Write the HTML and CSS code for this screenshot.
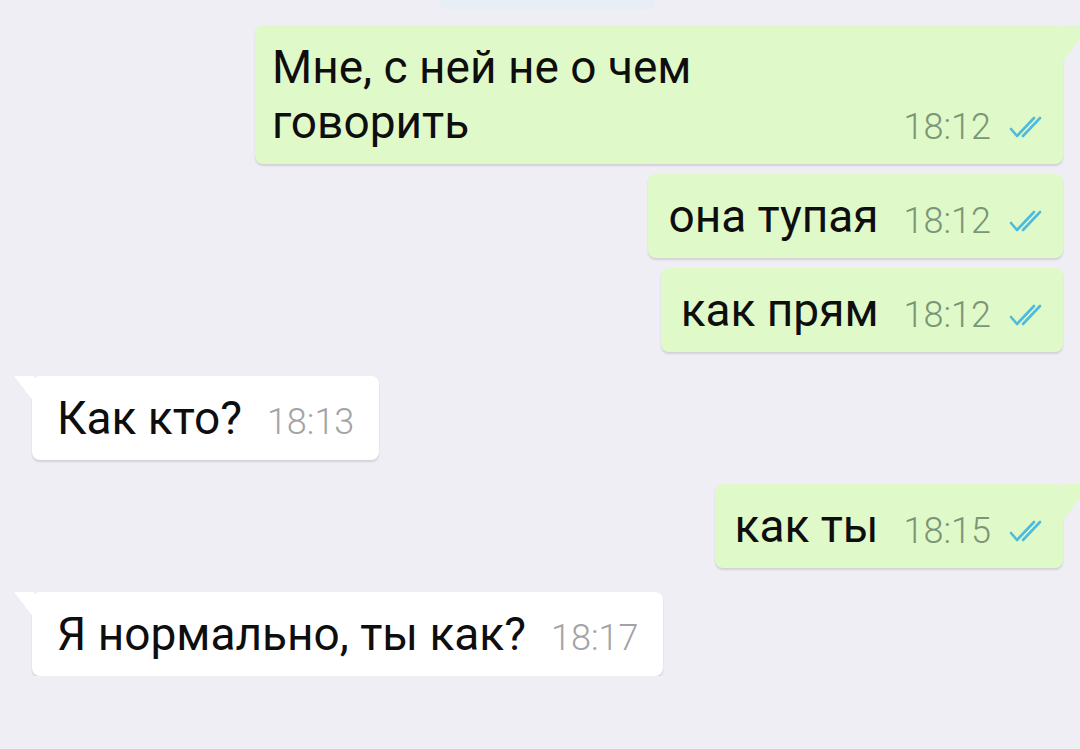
FILE: index.html
```html
<!DOCTYPE html>
<html lang="ru">
<head>
<meta charset="UTF-8">
<meta name="viewport" content="width=device-width, initial-scale=1.0">
<title>Чат</title>
<link rel="stylesheet" href="styles.css">
</head>
<body>

<div class="chat">
    <div class="date-chip"></div>

    <div class="row out">
        <div class="bubble wide">
            <span class="text">Мне, с ней не о чем<br>говорить</span>
            <span class="meta">18:12 <svg class="ticks" viewBox="0 0 37 22"><path d="M3 13 L9 20 L26 2"/><path d="M15 20 L32 2"/></svg></span>
        </div>
    </div>

    <div class="row out">
        <div class="bubble">
            <span class="text">она тупая</span>
            <span class="meta">18:12 <svg class="ticks" viewBox="0 0 37 22"><path d="M3 13 L9 20 L26 2"/><path d="M15 20 L32 2"/></svg></span>
        </div>
    </div>

    <div class="row out">
        <div class="bubble">
            <span class="text">как прям</span>
            <span class="meta">18:12 <svg class="ticks" viewBox="0 0 37 22"><path d="M3 13 L9 20 L26 2"/><path d="M15 20 L32 2"/></svg></span>
        </div>
    </div>

    <div class="row in gap">
        <div class="bubble tail">
            <span class="text">Как кто?</span>
            <span class="meta">18:13</span>
        </div>
    </div>

    <div class="row out gap">
        <div class="bubble tail">
            <span class="text">как ты</span>
            <span class="meta">18:15 <svg class="ticks" viewBox="0 0 37 22"><path d="M3 13 L9 20 L26 2"/><path d="M15 20 L32 2"/></svg></span>
        </div>
    </div>

    <div class="row in gap">
        <div class="bubble tail">
            <span class="text">Я нормально, ты как?</span>
            <span class="meta">18:17</span>
        </div>
    </div>
</div>

</body>
</html>
```

FILE: styles.css
```css
/* Общие стили */
body {
    margin: 0;
    padding: 0;
    background-color: #eeeef4;
    font-family: Roboto, 'Liberation Sans', sans-serif;
    color: #0e0e0e;
    overflow: hidden;
}
.chat {
    padding: 0 17px 0 32px;
}
.date-chip {
    width: 215px;
    height: 14px;
    margin: -4px auto 15px;
    background-color: #e7eef5;
    border-radius: 0 0 8px 8px;
}
/* Строки сообщений */
.row {
    display: flex;
}
.row + .row {
    margin-top: 10px;
}
.row.gap {
    margin-top: 24px;
}
.row.out {
    justify-content: flex-end;
}
.row.in {
    justify-content: flex-start;
}
/* Пузыри */
.bubble {
    position: relative;
    display: flex;
    align-items: last baseline;
    padding: 15px 18px 14px 20px;
    border-radius: 8px;
    box-shadow: 0 2px 2px rgba(0, 0, 0, 0.12);
    font-size: 46px;
    line-height: 55px;
}
.row.out .bubble {
    background-color: #e0f9c8;
}
.row.in .bubble {
    background-color: #fff;
    padding-left: 25px;
    padding-right: 25px;
}
.bubble.wide {
    width: 808px;
    box-sizing: border-box;
    padding-left: 17px;
}
.text {
    white-space: nowrap;
}
.meta {
    display: flex;
    align-items: center;
    margin-left: auto;
    padding-left: 25px;
    font-size: 36px;
    font-weight: 300;
    line-height: 40px;
    color: #7a9578;
    white-space: nowrap;
}
.row.in .meta {
    color: #a3a3a6;
}
.ticks {
    width: 37px;
    height: 22px;
    margin-left: 17px;
    fill: none;
    stroke: #4fbbdc;
    stroke-width: 2.6;
    stroke-linecap: round;
    stroke-linejoin: round;
}
/* Хвостики */
.bubble.wide::after,
.row.out .bubble.tail::after {
    content: "";
    position: absolute;
    top: 0;
    right: -26px;
    width: 28px;
    height: 37px;
    background-color: #e0f9c8;
    clip-path: polygon(0 0, 100% 0, 7% 100%);
}
.row.in .bubble.tail::after {
    content: "";
    position: absolute;
    top: 0;
    left: -18px;
    width: 20px;
    height: 26px;
    background-color: #fff;
    clip-path: polygon(0 0, 100% 0, 100% 100%);
}
```
